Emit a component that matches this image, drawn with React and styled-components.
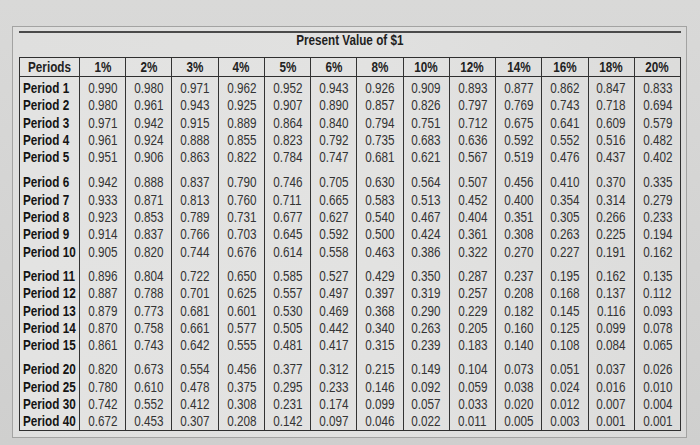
import React from "react";
import styled, { createGlobalStyle } from "styled-components";

const GlobalStyle = createGlobalStyle`
  html, body { margin: 0; padding: 0; }
  body {
    width: 700px;
    height: 445px;
    overflow: hidden;
    background: linear-gradient(180deg, #d9d9d8 0%, #d3d3d2 60%, #cfcfce 100%);
    font-family: "Liberation Sans", Arial, sans-serif;
  }
`;

const Page = styled.div`
  padding: 26px 0 0 12px;
`;

const Frame = styled.div`
  box-sizing: border-box;
  width: 675px;
  height: 412px;
  border: 1px solid #a3a3a2;
  background: linear-gradient(90deg, #dfdfde 0%, #e1e1e0 50%, #dadad9 100%);
  padding: 4px 5px 0 6px;
`;

const Rule = styled.div`
  height: 2px;
  background: #4a4a4a;
`;

const Title = styled.div`
  display: flex;
  justify-content: center;
  height: 24px;
`;

const Narrow = styled.span`
  display: inline-block;
  white-space: nowrap;
  transform: scaleX(0.78);
  transform-origin: ${(p) => p.$origin || "center"};
`;

const TitleText = styled(Narrow)`
  font-weight: 700;
  font-size: 15px;
  line-height: 15px;
  color: #1e1e1e;
  margin-top: -1px;
`;

const Table = styled.div`
  display: grid;
  grid-template-columns: 59px repeat(13, 1fr);
  border: 1px solid #2f2f2f;
  background: linear-gradient(90deg, #e3e3e2 0%, #e2e2e1 55%, #dcdcdb 100%);
`;

const Column = styled.div`
  display: flex;
  flex-direction: column;
  border-left: ${(p) => (p.$first ? "none" : "1px solid #333")};
  min-width: 0;
`;

const HeadCell = styled.div`
  height: 18px;
  line-height: 18px;
  border-bottom: 1px solid #2f2f2f;
  text-align: center;
  font-weight: 700;
  font-size: 15px;
  color: #222;
  white-space: nowrap;
`;

const Group = styled.div`
  display: flex;
  flex-direction: column;
  margin-top: ${(p) => p.$gap}px;
`;

const Cell = styled.div`
  height: 17.3px;
  line-height: 17.3px;
  font-size: 15px;
  white-space: nowrap;
  text-align: ${(p) => (p.$label ? "left" : "center")};
  padding-left: ${(p) => (p.$label ? "3px" : "0")};
  font-weight: ${(p) => (p.$label ? 700 : 400)};
  color: ${(p) => (p.$label ? "#141414" : "#333333")};
`;

const rates = ["1%", "2%", "3%", "4%", "5%", "6%", "8%", "10%", "12%", "14%", "16%", "18%", "20%"];

const groups = [
  [
    ["Period 1", "0.990 0.980 0.971 0.962 0.952 0.943 0.926 0.909 0.893 0.877 0.862 0.847 0.833"],
    ["Period 2", "0.980 0.961 0.943 0.925 0.907 0.890 0.857 0.826 0.797 0.769 0.743 0.718 0.694"],
    ["Period 3", "0.971 0.942 0.915 0.889 0.864 0.840 0.794 0.751 0.712 0.675 0.641 0.609 0.579"],
    ["Period 4", "0.961 0.924 0.888 0.855 0.823 0.792 0.735 0.683 0.636 0.592 0.552 0.516 0.482"],
    ["Period 5", "0.951 0.906 0.863 0.822 0.784 0.747 0.681 0.621 0.567 0.519 0.476 0.437 0.402"],
  ],
  [
    ["Period 6", "0.942 0.888 0.837 0.790 0.746 0.705 0.630 0.564 0.507 0.456 0.410 0.370 0.335"],
    ["Period 7", "0.933 0.871 0.813 0.760 0.711 0.665 0.583 0.513 0.452 0.400 0.354 0.314 0.279"],
    ["Period 8", "0.923 0.853 0.789 0.731 0.677 0.627 0.540 0.467 0.404 0.351 0.305 0.266 0.233"],
    ["Period 9", "0.914 0.837 0.766 0.703 0.645 0.592 0.500 0.424 0.361 0.308 0.263 0.225 0.194"],
    ["Period 10", "0.905 0.820 0.744 0.676 0.614 0.558 0.463 0.386 0.322 0.270 0.227 0.191 0.162"],
  ],
  [
    ["Period 11", "0.896 0.804 0.722 0.650 0.585 0.527 0.429 0.350 0.287 0.237 0.195 0.162 0.135"],
    ["Period 12", "0.887 0.788 0.701 0.625 0.557 0.497 0.397 0.319 0.257 0.208 0.168 0.137 0.112"],
    ["Period 13", "0.879 0.773 0.681 0.601 0.530 0.469 0.368 0.290 0.229 0.182 0.145 0.116 0.093"],
    ["Period 14", "0.870 0.758 0.661 0.577 0.505 0.442 0.340 0.263 0.205 0.160 0.125 0.099 0.078"],
    ["Period 15", "0.861 0.743 0.642 0.555 0.481 0.417 0.315 0.239 0.183 0.140 0.108 0.084 0.065"],
  ],
  [
    ["Period 20", "0.820 0.673 0.554 0.456 0.377 0.312 0.215 0.149 0.104 0.073 0.051 0.037 0.026"],
    ["Period 25", "0.780 0.610 0.478 0.375 0.295 0.233 0.146 0.092 0.059 0.038 0.024 0.016 0.010"],
    ["Period 30", "0.742 0.552 0.412 0.308 0.231 0.174 0.099 0.057 0.033 0.020 0.012 0.007 0.004"],
    ["Period 40", "0.672 0.453 0.307 0.208 0.142 0.097 0.046 0.022 0.011 0.005 0.003 0.001 0.001"],
  ],
].map((g) => g.map(([label, vals]) => [label, vals.split(" ")]));

const gaps = [2, 8, 7, 7];

export default function App() {
  return (
    <>
      <GlobalStyle />
      <Page>
        <Frame>
          <Rule />
          <Title>
            <TitleText>Present Value of $1</TitleText>
          </Title>
          <Table>
            <Column $first>
              <HeadCell>
                <Narrow>Periods</Narrow>
              </HeadCell>
              {groups.map((g, gi) => (
                <Group key={gi} $gap={gaps[gi]}>
                  {g.map(([label]) => (
                    <Cell key={label} $label>
                      <Narrow $origin="left center">{label}</Narrow>
                    </Cell>
                  ))}
                </Group>
              ))}
            </Column>
            {rates.map((r, ci) => (
              <Column key={r}>
                <HeadCell>
                  <Narrow>{r}</Narrow>
                </HeadCell>
                {groups.map((g, gi) => (
                  <Group key={gi} $gap={gaps[gi]}>
                    {g.map(([label, vals]) => (
                      <Cell key={label}>
                        <Narrow>{vals[ci]}</Narrow>
                      </Cell>
                    ))}
                  </Group>
                ))}
              </Column>
            ))}
          </Table>
        </Frame>
      </Page>
    </>
  );
}
